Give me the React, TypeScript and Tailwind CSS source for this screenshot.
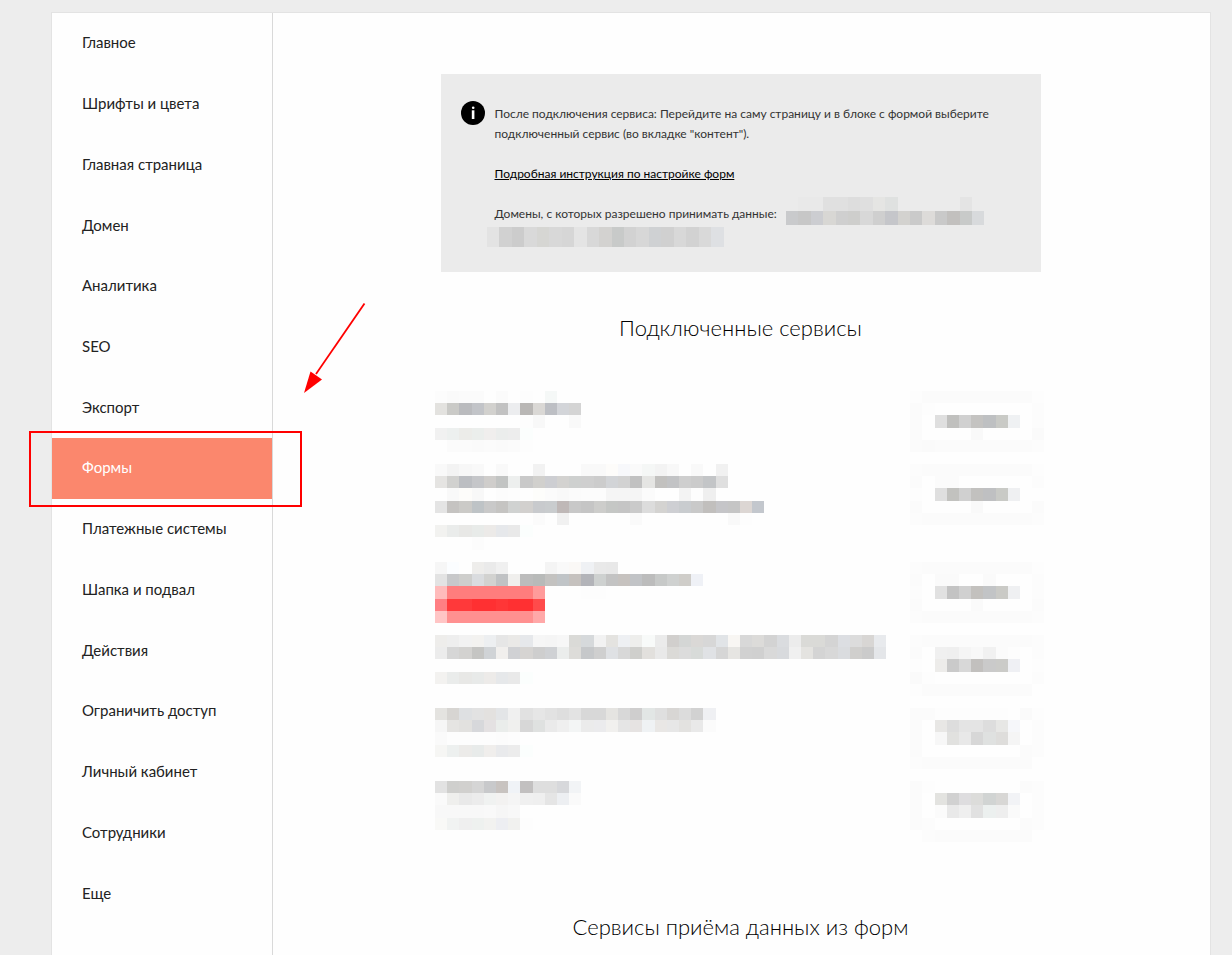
const CELL_W = 12.2;
const CELL_H = 12.24;

const PAGES = [
  "Главное",
  "Шрифты и цвета",
  "Главная страница",
  "Домен",
  "Аналитика",
  "SEO",
  "Экспорт",
  "Формы",
  "Платежные системы",
  "Шапка и подвал",
  "Действия",
  "Ограничить доступ",
  "Личный кабинет",
  "Сотрудники",
  "Еще",
];

// Each string is one row of tiles: two digits for a grey, six for a colour, "--" for a gap.
type Tiles = string[];

const SERVICES: { name: Tiles; action: Tiles }[] = [
  {
    name: [
      "fc fa fb fb -- fb -- fd fe f5f8f7",
      "e3e2df cacac7 babbbe c2c4c8 d2d1ce c2 ecedef b9b7b5 dad8d5 bdbfc4 d3d5d9 d4",
      "-- -- -- -- -- -- -- fd f8 -- fe f9",
      "f1 edf0ef ecece9 ebeeec f0eeed ebedec ed fbfefd",
      "fe fb fb fa fb fa fb fd",
    ],
    action: [
      "-- fd fb fb fb fb fb fb fb fb fb fd",
      "-- fb fd -- -- -- -- -- -- -- -- fc",
      "fe fb -- df c0c0be d0 c4c3c1 bec0c2 c9cac6 eff1f3 -- fc",
      "fe fb -- -- -- -- f9 -- -- -- -- fa",
      "-- fb fa fb fb fb fb fb fb fb fb fc",
    ],
  },
  {
    name: [
      "f9 f3 f7 f9 -- f9 -- fe f2 -- -- -- f9 f9 fdfcfa f7f8fb fa f5f7f6 f3 f8 -- f9 -- f1",
      "e5e4e2 d1d1cf bcbec2 c5c6c9 cfcdcb c2c4c3 edefee c9 d1d0cd cdced2 d3d2d0 ced0cf cf cc d2d4d7 d2 c1 e5e5e3 c2c1bf c2c3c5 ce cb c3c5c7 df",
      "-- f9 fdfcfa f8 -- fc fd -- fdfdfb fb f9 fb fc fc f5 f5 f5 fb -- -- f3 fd ef",
      "e4 c5c3c1 cbcac7 bec3c6 c9 c5c4c2 d0d2d1 d2d0ce c8cacd c9ccce bfb8b7 c8 c5 cdcdcb c5c7c5 c5 ca dc d4d3d1 cecfd3 c9cccf c9 c1bfbd c5c5c8 c5 dcd6d3 c3c7cd",
      "-- -- -- -- -- -- -- -- fb -- f1 -- -- -- -- -- fa -- -- -- -- -- -- -- f9 fd",
      "f2f2f0 eaeceb e8e8e6 e8ebe9 eceae8 e6e8eb e9 fbfefd",
      "-- -- fe fc",
    ],
    action: [
      "-- fc fb fb fb fb fb fb fb fb fb fd",
      "fe fb -- fb fb -- -- -- -- -- -- fc",
      "-- fd -- df c2c2bf d0 c2c1bf bfc0c2 c9cac6 eff0f2 -- fe",
      "fe fb -- -- -- -- f9 -- -- -- -- fb",
      "-- fc fb fb fb fb fb fb fb fb fb fc",
    ],
  },
  {
    name: [
      "f6 fbfdff -- eeedeb ea f0 -- -- -- f4 f9 faf8f6 eff1f4 e9 e8 -- -- --",
      "e3 c7c8ca cececc dadcdf d2d2d0 c0c2c4 f0efed bc b8bab9 c3c2c0 c0c4c7 c5c1be b3b4b9 ced1d0 c3 c6c2bf c1c3c6 bc c7c9c8 cfd1d0 cfcdc9 eff1f6",
      "ffbbbb ff7d7d ff7d7d ff7d7d ff7d7d ff7d7d ff7d7d ff7d7d ff9b9b -- -- -- fd fd",
      "ff7f83 ff393a ff393a ff3032 ff3032 ff3637 ff3032 ff3032 ff4b4b",
      "ffc5c5 ff9090 ff9090 ff9090 ff9090 ff9090 ff9090 ff9090 ffa8a8",
    ],
    action: [
      "-- fc fb fb fb fb fb fb fb fb fb fd",
      "fe fb -- fa fa -- -- fa -- -- -- fc",
      "fe fc -- e1 c3 d0 c3c1be c2c4c6 cacac6 eff0f2 -- fc",
      "fe fb -- -- -- -- fa -- -- -- -- fb",
      "-- fc fb fb fb fb fb fb fb fb fb fc",
    ],
  },
  {
    name: [
      "eeedeb ee f2 f3f2f0 edeff1 e6 eae9e7 e6e8eb f6 f5 f7 dadad7 d6d9db f2 e4e3e0 eef0f3 eeeeec f8faf9 eb d1cfcd d4d6d5 dad8d6 d7 e1e4e7 f8f6f3 d8 dcdbd9 d3 dadcdf ec dadad7 dadad7 d4 dcdee2 dc d8d6d4 e8eaed",
      "ec d6 d3d2d0 c5c5c3 d0d3d6 f1efed d0d1d4 d6d4d2 ce cfd1d4 ebedec dddcd9 c6c8ca cf dfe1e4 d8 cfcfcc e2e0dd e9 dbdad7 dc d8dbd9 e0e2e5 d6 e6e5e2 d1 d0 d9 d8dadd f0 e4e3e0 d4 d8 dadcdf d0cfcd cb e4e6e9",
      "fe",
      "f3f2f0 eaeceb e8e8e6 e8eae9 edebe9 e6e8ea e9 fbfefd",
      "",
    ],
    action: [
      "-- fc fb fb fb fb fb fb fb fb fb fc",
      "fe fb -- f0 ef f5 f8 f1 fb fd -- fc",
      "-- fd -- edecea ca d8 c2c0be ca cbcbc8 eff0f4 -- fd",
      "-- fa fd -- -- -- -- -- -- -- -- fc",
      "-- fd fb fb fb fb fb fb fb fb fb fe",
    ],
  },
  {
    name: [
      "e4e3e0 d7d5d2 dee0e2 e2 e3e1df e3e5e7 f0 e1 e6 e2 de e3 d8 d8 e5e4e1 d8 cfcece e2e6e5 df d8d6d4 dc d2 eff0f3",
      "f6 e5e4e2 e2e1df d7d8db e4e1e2 eaedeb f0f0ee d7 dfe1e0 ea ef f3f5f5 eb ebebed f1f0ee e5 e6e3e2 eff2f4 e9e7e5 e7 e3e2e0 e9 fb",
      "fa fd fd fd fd fc fd fe",
      "f6f6f4 edf0ef ecebe9 e8ebea f0eeec e9eaec ec fbfefd",
      "",
    ],
    action: [
      "-- fb fb fd fd fd fd fd fd fe fa fd",
      "fe fb -- e8e7e5 dd e4 e4 dd e7e7e5 f6f7fa -- fc",
      "-- fb -- f7 e1e1df e8 d7 dfe1e0 dedddb f5 -- fc",
      "-- fb -- -- -- -- -- -- -- -- fb fc",
      "-- fc fb fb fb fb fb fb fb fb fb fe",
    ],
  },
  {
    name: [
      "e2 cfcfcd d1d0ce d5 c8c9cb c8c3c0 f0f3f7 c2c0c0 de de d7d8db f2f4f6",
      "fa efefed e9 ec f0f2f1 f3f2f1 f5 f0 ef e5 edeff2 fa",
      "f8 f8 f8 f8 f9 f6 f8 fe",
      "f9f9f7 f1f3f2 ef eef1ef f2f2f0 edeef2 f1f1ef fd",
      "",
    ],
    action: [
      "-- fb fd -- -- -- -- -- -- -- fb fc",
      "fe fb -- e3e3e0 d1 dedddf dcdcda d1d4d3 d8d7d5 f2f3f6 -- fc",
      "fe fb -- fb e9 ef e1 ecf0ef ee fa -- fc",
      "-- fb fc -- -- -- -- -- -- -- fb fc",
      "-- -- fc fb fb fb fb fb fb fb fb --",
    ],
  },
];

const DOMAIN_FIRST: Tiles = [
  "-- e9 e9 e0 e0 dd df e5e5e3 dfe1e0 -- -- -- -- -- e4",
  "c9cacc c7 cccdd1 d8d7d4 cf cececc d8 cf c5c6ca d3d2cf ca dddbd9 c9 c2c0be c8cac9 d8dadc",
];

const DOMAIN_SECOND: Tiles = [
  "e3 d1 cc d9 d6d6d3 d8 d6 e4 d8 d3d2d0 c8cac9 d2 d7 cfd1d3 d0 d8 d2 d9 dee0e3",
];

function Mosaic({
  tiles,
  cellWidth = CELL_W,
  cellHeight = CELL_H,
  className = "",
}: {
  tiles: Tiles;
  cellWidth?: number;
  cellHeight?: number;
  className?: string;
}) {
  const rows = tiles.map((row) => row.split(" ").filter(Boolean));
  const columns = Math.max(...rows.map((row) => row.length));
  const x = (i: number) => Math.round(i * cellWidth);
  const y = (i: number) => Math.round(i * cellHeight);
  return (
    <svg
      aria-hidden="true"
      width={x(columns)}
      height={y(rows.length)}
      shapeRendering="crispEdges"
      className={`block shrink-0 ${className}`}
    >
      {rows.map((row, r) =>
        row.map((tone, c) =>
          tone === "--" ? null : (
            <rect
              key={`${r}-${c}`}
              x={x(c)}
              y={y(r)}
              width={x(c + 1) - x(c)}
              height={y(r + 1) - y(r)}
              fill={`#${tone.length === 2 ? tone.repeat(3) : tone}`}
            />
          ),
        ),
      )}
    </svg>
  );
}

function Sidebar() {
  return (
    <nav className="w-[221px] shrink-0 border-r border-[#d9d9d9]">
      <ul className="grid h-[911px] auto-rows-fr text-[15px] leading-6 text-[#222]">
        {PAGES.map((page) => {
          const active = page === "Формы";
          return (
            <li key={page} className="relative flex">
              <a
                href="#"
                aria-current={active ? "page" : undefined}
                className={
                  active
                    ? "flex flex-1 items-center bg-[#fb876d] pb-0.5 pl-[30px] text-white"
                    : "flex flex-1 items-center pb-0.5 pl-[30px]"
                }
              >
                {page}
              </a>
              {active && <Callout />}
            </li>
          );
        })}
      </ul>
    </nav>
  );
}

function Callout() {
  return (
    <>
      <span className="pointer-events-none absolute -top-[7px] -right-[30px] -bottom-2 -left-[23px] border-2 border-[#f00]" />
      <svg
        aria-hidden="true"
        width="64"
        height="94"
        viewBox="0 0 64 94"
        className="pointer-events-none absolute -top-[137px] left-[250px]"
      >
        <path d="M62.5 2.5 14 73" stroke="#f00" strokeWidth="1.8" fill="none" />
        <path d="M2 92 8.5 70.5 20 78.5Z" fill="#f00" />
      </svg>
    </>
  );
}

function Notice() {
  return (
    <section className="relative mx-auto flex w-full max-w-[600px] gap-2.5 bg-[#ebebeb] px-5 pt-[30px] pb-7 text-[12px] leading-5 text-[#333]">
      <svg aria-hidden="true" width="24" height="24" viewBox="0 0 24 24" className="-mt-[3px] shrink-0">
        <circle cx="12" cy="12" r="12" />
        <circle cx="12.2" cy="6.7" r="1.3" fill="#fff" />
        <path d="M10.8 9.3h2.6v8.7h-2.6z" fill="#fff" />
      </svg>
      <div className="min-w-0 flex-1">
        <p>
          После подключения сервиса: Перейдите на саму страницу и в блоке с формой выберите
          подключенный сервис (во вкладке "контент").
        </p>
        <p className="mt-5">
          <a href="#" className="text-black underline">
            Подробная инструкция по настройке форм
          </a>
        </p>
        <p className="mt-5 mb-5">Домены, с которых разрешено принимать данные:</p>
      </div>
      <Mosaic
        tiles={DOMAIN_FIRST}
        cellWidth={12.4}
        cellHeight={14}
        className="absolute top-[123px] left-[345px]"
      />
      <Mosaic
        tiles={DOMAIN_SECOND}
        cellWidth={12.45}
        cellHeight={20}
        className="absolute top-[153px] left-[46px]"
      />
    </section>
  );
}

export default function App() {
  return (
    <div className="min-h-screen bg-[#ededed] pt-3 pr-[21px] pl-[51px] font-['Lato','Open_Sans',sans-serif]">
      <div className="flex min-h-[943px] border border-b-0 border-[#e3e3e3] bg-[#fefefe]">
        <Sidebar />
        <main className="min-w-0 flex-1 pt-[61px] pr-0.5">
          <Notice />
          <h2 className="mt-10 text-center text-[22px] leading-8 font-light text-black">
            Подключенные сервисы
          </h2>
          <ul className="mx-auto mt-[47px] flex w-full max-w-[612px] flex-col gap-3 pr-[3px]">
            {SERVICES.map((service, i) => (
              <li key={i} className="flex items-start justify-between">
                <Mosaic tiles={service.name} />
                <Mosaic tiles={service.action} />
              </li>
            ))}
          </ul>
          <h2 className="mt-[69px] text-center text-[22px] leading-8 font-light text-black">
            Сервисы приёма данных из форм
          </h2>
        </main>
      </div>
    </div>
  );
}
